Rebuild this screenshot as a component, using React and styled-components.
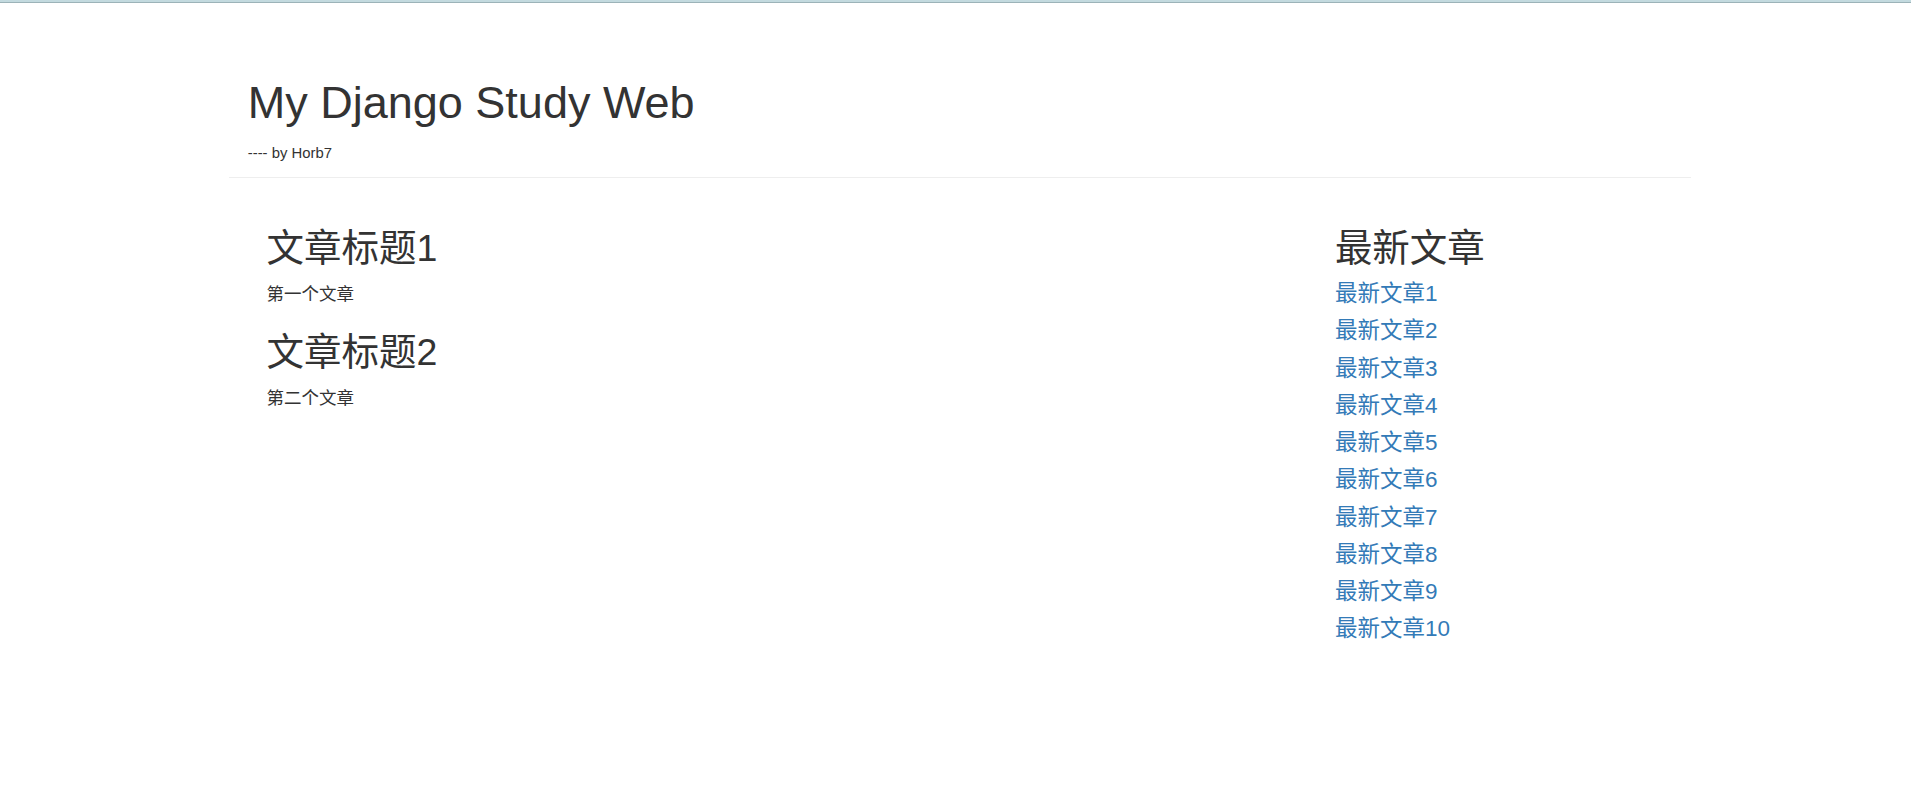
import React from "react";
import styled, { createGlobalStyle } from "styled-components";

// Bootstrap 3 look, rendered at 125% (all sizes below are already scaled)
const GlobalStyle = createGlobalStyle`
  html, body {
    margin: 0;
    padding: 0;
    background: #fff;
  }
  body {
    font-family: "Liberation Sans", "Noto Sans CJK SC", Arial, sans-serif;
    font-size: 17.5px;
    line-height: 1.42857;
    color: #333;
  }
  * {
    box-sizing: border-box;
  }
`;

const TopBar = styled.div`
  height: 3px;
  background: #c3dadf;
  border-bottom: 1px solid #9cb3b8;
`;

const Container = styled.div`
  width: 1462px;
  margin: 0 220px 0 229px;
  padding: 0 18.75px;
  display: flow-root;
`;

const PageHeader = styled(Container)`
  margin-top: 50px;
  margin-bottom: 25px;
  padding-bottom: 11.25px;
  border-bottom: 1.25px solid #eee;
`;

const Title = styled.h1`
  font-size: 45px;
  font-weight: 400;
  line-height: 1.1;
  margin: 25px 0 12.5px;
`;

const Byline = styled.div`
  line-height: 25px;
`;

const Small = styled.small`
  font-size: 85%;
`;

const Columns = styled(Container)`
  display: flex;
  align-items: flex-start;
`;

const Column = styled.div`
  width: ${({ $span }) => ($span / 12) * 100}%;
  padding: 0 18.75px;
  display: flow-root;
`;

const Heading = styled.h2`
  font-size: 37.5px;
  font-weight: 400;
  line-height: 1.1;
  margin: 25px 0 12.5px;
`;

const Summary = styled.p`
  margin: 0 0 12.5px;
  line-height: 25px;
`;

const LinkItem = styled.h4`
  font-size: 22.5px;
  font-weight: 400;
  line-height: 1.1;
  margin: 12.5px 0;
`;

const Link = styled.a`
  color: #337ab7;
  text-decoration: none;
  &:hover {
    color: #23527c;
    text-decoration: underline;
  }
`;

const articles = [
  { title: "文章标题1", body: "第一个文章" },
  { title: "文章标题2", body: "第二个文章" },
];

const latest = Array.from({ length: 10 }, (_, i) => `最新文章${i + 1}`);

const App = () => {
  return (
    <>
      <GlobalStyle />
      <TopBar />
      <PageHeader>
        <Title>My Django Study Web</Title>
        <Byline>
          <Small>---- by Horb7</Small>
        </Byline>
      </PageHeader>
      <Columns>
        <Column $span={9}>
          {articles.map((a) => (
            <React.Fragment key={a.title}>
              <Heading>{a.title}</Heading>
              <Summary>{a.body}</Summary>
            </React.Fragment>
          ))}
        </Column>
        <Column $span={3}>
          <Heading>最新文章</Heading>
          {latest.map((t) => (
            <LinkItem key={t}>
              <Link href="#">{t}</Link>
            </LinkItem>
          ))}
        </Column>
      </Columns>
    </>
  );
};

export default App;
